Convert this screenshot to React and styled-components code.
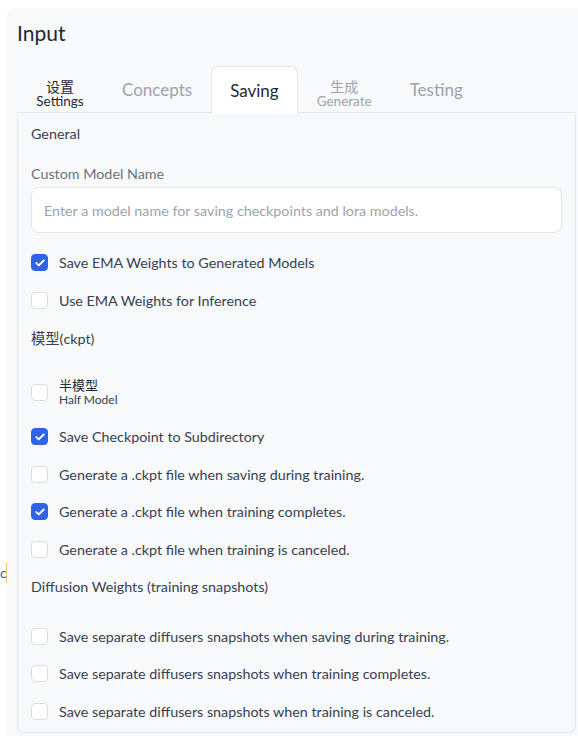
import React from 'react';
import styled, { createGlobalStyle } from 'styled-components';

const GlobalStyle = createGlobalStyle`
  body {
    margin: 0;
    background: #ffffff;
    font-family: "Source Sans Pro", Lato, "Noto Sans CJK SC", sans-serif;
    color: #374151;
  }
`;

const tabs = [
  { zh: '设置', en: 'Settings', dark: true },
  { en: 'Concepts' },
  { en: 'Saving', selected: true },
  { zh: '生成', en: 'Generate' },
  { en: 'Testing' },
];

const rows = [
  { type: 'check', label: 'Save EMA Weights to Generated Models', checked: true, gap: 11 },
  { type: 'check', label: 'Use EMA Weights for Inference' },
  { type: 'heading', label: '模型(ckpt)' },
  { type: 'half' },
  { type: 'check', label: 'Save Checkpoint to Subdirectory', checked: true },
  { type: 'check', label: 'Generate a .ckpt file when saving during training.' },
  { type: 'check', label: 'Generate a .ckpt file when training completes.', checked: true },
  { type: 'check', label: 'Generate a .ckpt file when training is canceled.' },
  { type: 'heading', label: 'Diffusion Weights (training snapshots)' },
  { type: 'check', label: 'Save separate diffusers snapshots when saving during training.', gap: 12 },
  { type: 'check', label: 'Save separate diffusers snapshots when training completes.' },
  { type: 'check', label: 'Save separate diffusers snapshots when training is canceled.' },
];

const CheckMark = () => (
  <svg width="10" height="8" viewBox="0 0 10 8">
    <path d="M1.3 4.1 L3.8 6.4 L8.7 1.5" fill="none" stroke="#fff" strokeWidth="1.9" strokeLinecap="round" strokeLinejoin="round" />
  </svg>
);

export default function App() {
  return (
    <>
      <GlobalStyle />
      <Page>
        <Stub><StubChar>c</StubChar></Stub>
        <Panel>
          <Title>Input</Title>
          <TabBar>
            {tabs.map((t) => (
              <Tab key={t.en} $selected={t.selected} $dark={t.dark || t.selected}>
                {t.zh ? (
                  <TabStack>
                    <TabZh>{t.zh}</TabZh>
                    <TabEn>{t.en}</TabEn>
                  </TabStack>
                ) : t.en}
              </Tab>
            ))}
          </TabBar>
          <Content>
            <Heading>General</Heading>
            <FieldLabel>Custom Model Name</FieldLabel>
            <TextInput placeholder="Enter a model name for saving checkpoints and lora models." />
            {rows.map((r, i) => {
              if (r.type === 'heading') return <SectionRow key={i}>{r.label}</SectionRow>;
              if (r.type === 'half')
                return (
                  <HalfRow key={i}>
                    <Box />
                    <HalfStack>
                      <HalfZh>半模型</HalfZh>
                      <HalfEn>Half Model</HalfEn>
                    </HalfStack>
                  </HalfRow>
                );
              return (
                <CheckRow key={i} $gap={r.gap || 0}>
                  <Box $checked={r.checked}>{r.checked && <CheckMark />}</Box>
                  <span>{r.label}</span>
                </CheckRow>
              );
            })}
          </Content>
        </Panel>
      </Page>
    </>
  );
}

const Page = styled.div`
  display: flex;
  height: 736px;
  overflow: hidden;
`;

const Stub = styled.div`
  width: 7px;
  flex: 0 0 7px;
  overflow: hidden;
  padding-top: 563px;
`;

const StubChar = styled.div`
  font-size: 14px;
  line-height: 20px;
  color: #3b5bab;
  border-right: 1px solid #f5c26b;
  width: 6px;
`;

const Panel = styled.div`
  flex: 1;
  margin-top: 8px;
  background: #f8f9fb;
  border-radius: 8px 0 0 0;
  padding: 12px 2px 0 10px;
  display: flex;
  flex-direction: column;
`;

const Title = styled.div`
  font-size: 21px;
  line-height: 26px;
  color: #1f2937;
`;

const TabBar = styled.div`
  display: flex;
  margin-top: 20px;
  height: 47px;
  position: relative;
  z-index: 1;
`;

const Tab = styled.div`
  display: flex;
  align-items: center;
  justify-content: center;
  padding: 0 18px;
  height: ${(p) => (p.$selected ? '47px' : '46px')};
  font-size: 17px;
  color: ${(p) => (p.$dark ? '#1f2937' : '#9ca3af')};
  background: ${(p) => (p.$selected ? '#ffffff' : 'transparent')};
  border: 1px solid ${(p) => (p.$selected ? '#e5e7eb' : 'transparent')};
  border-bottom: none;
  border-radius: 8px 8px 0 0;
  box-sizing: border-box;
  &:first-child {
    width: 86px;
  }
`;

const TabStack = styled.div`
  display: flex;
  flex-direction: column;
  align-items: center;
  margin-top: 8px;
`;

const TabZh = styled.span`
  font-size: 14px;
  line-height: 15px;
`;

const TabEn = styled.span`
  font-size: 13.5px;
  line-height: 14px;
`;

const Content = styled.div`
  margin-top: -1px;
  border: 1px solid #e5e7eb;
  border-radius: 0 0 8px 8px;
  padding: 11px 13px 2px 13px;
  display: flex;
  flex-direction: column;
  font-size: 14.3px;
`;

const Heading = styled.div`
  line-height: 20px;
  color: #374151;
`;

const FieldLabel = styled.div`
  margin-top: 20px;
  line-height: 20px;
  color: #6b7280;
`;

const TextInput = styled.input`
  margin-top: 3px;
  height: 46px;
  box-sizing: border-box;
  border: 1px solid #e5e7eb;
  border-radius: 8px;
  background: #ffffff;
  padding: 0 12px;
  font-family: inherit;
  font-size: 14.3px;
  color: #374151;
  outline: none;
  &::placeholder {
    color: #9ca3af;
  }
`;

const CheckRow = styled.div`
  display: flex;
  align-items: center;
  gap: 11px;
  height: 37.5px;
  margin-top: ${(p) => p.$gap}px;
  color: #374151;
`;

const SectionRow = styled.div`
  display: flex;
  align-items: center;
  height: 37.5px;
  color: #374151;
`;

const HalfRow = styled.div`
  display: flex;
  align-items: center;
  gap: 11px;
  height: 40px;
  margin: 16px 0 5.5px;
`;

const HalfStack = styled.div`
  display: flex;
  flex-direction: column;
`;

const HalfZh = styled.span`
  font-size: 13px;
  line-height: 15px;
  color: #1f2937;
`;

const HalfEn = styled.span`
  font-size: 12px;
  line-height: 14px;
  color: #374151;
`;

const Box = styled.div`
  width: 17px;
  height: 17px;
  flex: 0 0 17px;
  box-sizing: border-box;
  border-radius: 4px;
  display: flex;
  align-items: center;
  justify-content: center;
  background: ${(p) => (p.$checked ? '#2f63e8' : '#ffffff')};
  border: 1px solid ${(p) => (p.$checked ? '#2f63e8' : '#d9dce1')};
`;
